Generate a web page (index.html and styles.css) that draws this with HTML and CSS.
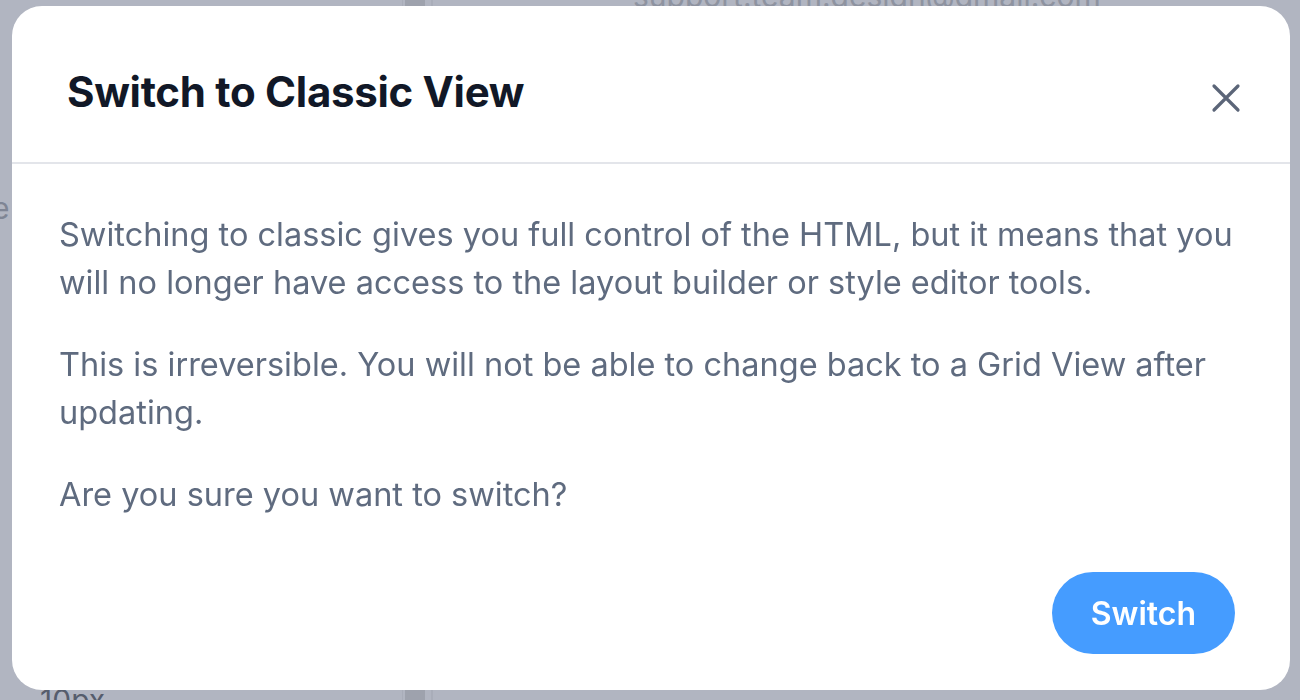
FILE: index.html
```html
<!DOCTYPE html>
<html lang="en">
<head>
<meta charset="utf-8">
<title>Switch to Classic View</title>
<link rel="stylesheet" href="styles.css">
</head>
<body>
<div class="page">
  <div class="page-top">
    <div class="page-col-left"></div>
    <div class="page-scroll"></div>
    <div class="page-email">support.team.design@gmail.com</div>
  </div>
  <div class="page-mid">
    <div class="page-side-label">e</div>
  </div>
  <div class="page-bottom">
    <span class="page-bottom-text">10px</span>
    <div class="page-scroll"></div>
  </div>
</div>

<div class="overlay">
  <div class="modal" role="dialog" aria-labelledby="modal-title">
    <div class="modal-header">
      <h2 class="modal-title" id="modal-title">Switch to Classic View</h2>
      <button class="modal-close" aria-label="Close">
        <svg viewBox="0 0 30 30" width="30" height="30">
          <path d="M3 3 L27 27 M27 3 L3 27" stroke="currentColor" stroke-width="3.2" stroke-linecap="round" fill="none"/>
        </svg>
      </button>
    </div>
    <div class="modal-body">
      <p>Switching to classic gives you full control of the HTML, but it means that you will no longer have access to the layout builder or style editor tools.</p>
      <p>This is irreversible. You will not be able to change back to a Grid View after updating.</p>
      <p>Are you sure you want to switch?</p>
    </div>
    <div class="modal-footer">
      <button class="btn-primary">Switch</button>
    </div>
  </div>
</div>
</body>
</html>
```

FILE: styles.css
```css
* { box-sizing: border-box; }

html, body {
  margin: 0;
  padding: 0;
  height: 700px;
  overflow: hidden;
}

body {
  background: #b1b5c1;
  font-family: Inter, "Noto Sans", "Liberation Sans", sans-serif;
}

/* faint page behind the overlay */
.page {
  height: 700px;
  display: flex;
  flex-direction: column;
}

.page-top {
  display: flex;
  align-items: flex-start;
  height: 20px;
  flex: 0 0 auto;
}

.page-col-left {
  width: 403px;
  height: 20px;
  border-right: 1px solid #a9adb9;
}

.page-scroll {
  width: 30px;
  height: 20px;
  border-right: 2px solid #a9adb9;
  background: linear-gradient(to right, #b1b5c1 0 2px, #9ea2ad 2px 22px, #b1b5c1 22px);
}

.page-email {
  margin-top: -22px;
  padding-left: 200px;
  font-size: 30px;
  color: #8e93a0;
  white-space: nowrap;
}

.page-mid {
  flex: 1 1 auto;
  padding-top: 170px;
}

.page-side-label {
  font-size: 30px;
  line-height: 36px;
  color: #7f8594;
  margin-left: -8px;
}

.page-bottom {
  display: flex;
  align-items: flex-end;
  height: 24px;
  flex: 0 0 auto;
}

.page-bottom-text {
  width: 403px;
  padding-left: 40px;
  padding-top: 12px;
  height: 24px;
  overflow: hidden;
  font-size: 30px;
  line-height: 24px;
  color: #565d6d;
  border-right: 1px solid #a9adb9;
}

/* overlay + modal */
.overlay {
  position: fixed;
  inset: 0;
}

.modal {
  position: absolute;
  left: 12px;
  top: 6px;
  width: 1278px;
  height: 684px;
  background: #ffffff;
  border-radius: 30px;
  display: flex;
  flex-direction: column;
}

.modal-header {
  height: 158px;
  border-bottom: 2px solid #e3e5ea;
  display: flex;
  align-items: center;
  justify-content: space-between;
  padding: 0 49px 0 55px;
  flex: 0 0 auto;
}

.modal-title {
  margin: 14px 0 0;
  font-size: 42px;
  font-weight: 700;
  color: #111827;
  letter-spacing: -0.3px;
}

.modal-close {
  border: 0;
  background: none;
  padding: 0;
  margin-top: 28px;
  color: #5b6578;
  width: 30px;
  height: 30px;
  display: flex;
  cursor: pointer;
}

.modal-body {
  flex: 1 1 auto;
  padding: 47px 30px 0 47px;
}

.modal-body p {
  margin: 0 0 34px;
  font-size: 32.5px;
  line-height: 48px;
  color: #5f6b7f;
}

.modal-footer {
  display: flex;
  justify-content: flex-end;
  padding: 0 55px 36px;
}

.btn-primary {
  height: 82px;
  padding: 0 39px;
  border: 0;
  border-radius: 41px;
  background: #459cff;
  color: #ffffff;
  font-family: Inter, "Noto Sans", "Liberation Sans", sans-serif;
  font-size: 32px;
  font-weight: 600;
  cursor: pointer;
}
```
